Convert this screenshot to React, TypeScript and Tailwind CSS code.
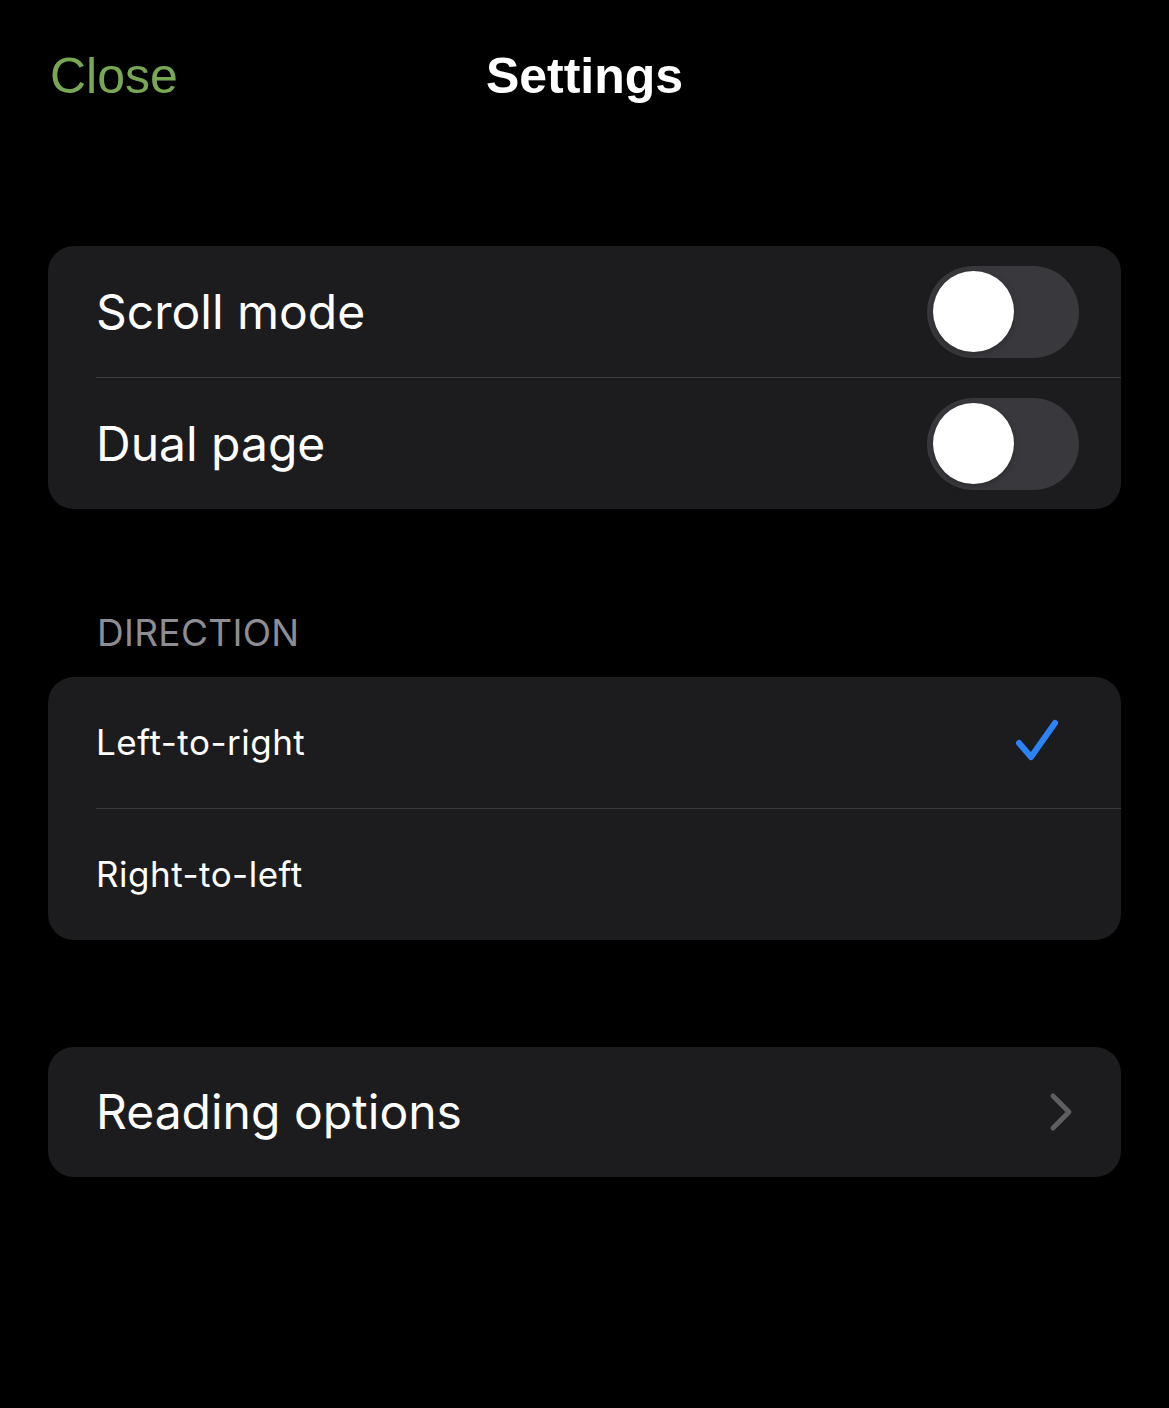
import React from "react";

function Toggle() {
  return (
    <div className="w-[152px] h-[92px] rounded-full bg-[#39393d] p-[6px] flex items-center">
      <div className="w-[81px] h-[81px] rounded-full bg-white shadow-[0_2px_6px_rgba(0,0,0,0.25)]" />
    </div>
  );
}

function Check() {
  return (
    <svg width="52" height="52" viewBox="0 0 52 52" fill="none">
      <path
        d="M6 26 L18 40 L42 6"
        stroke="#2b84f6"
        strokeWidth="6"
        strokeLinecap="round"
        strokeLinejoin="round"
      />
    </svg>
  );
}

function Chevron() {
  return (
    <svg width="30" height="40" viewBox="0 0 30 40" fill="none">
      <path
        d="M6 4 L22 20 L6 36"
        stroke="#5d5d62"
        strokeWidth="5"
        strokeLinecap="round"
        strokeLinejoin="round"
      />
    </svg>
  );
}

export default function App() {
  const sf = { fontFamily: "Inter, 'Liberation Sans', sans-serif" };
  return (
    <div className="w-[1169px] h-[1408px] bg-black text-white" style={sf}>
      <header
        className="relative h-[150px] flex items-start pt-[46px] px-[50px]"
        style={{ fontFamily: "'Liberation Sans', Arial, sans-serif" }}
      >
        <span className="text-[50px] leading-[60px] text-[#79a855]">Close</span>
        <span className="absolute left-0 right-0 top-[46px] text-center text-[50px] leading-[60px] font-bold">
          Settings
        </span>
      </header>

      <div className="px-[48px] pt-[96px]">
        <section className="rounded-[26px] bg-[#1c1c1e] overflow-hidden">
          <div className="h-[131px] pl-[48px] pr-[42px] flex items-center justify-between">
            <span className="text-[48px]">Scroll mode</span>
            <Toggle />
          </div>
          <div className="ml-[48px] h-px bg-[#3a3a3c]" />
          <div className="h-[131px] pl-[48px] pr-[42px] flex items-center justify-between">
            <span className="text-[48px]">Dual page</span>
            <Toggle />
          </div>
        </section>

        <div className="pt-[102px] pb-[23px] pl-[49px] text-[37px] leading-[43px] text-[#8d8d93] tracking-[0.3px]">
          DIRECTION
        </div>

        <section className="rounded-[26px] bg-[#1c1c1e] overflow-hidden">
          <div className="h-[131px] pl-[48px] pr-[56px] flex items-center justify-between">
            <span className="text-[35px] tracking-[0.5px]">Left-to-right</span>
            <Check />
          </div>
          <div className="ml-[48px] h-px bg-[#3a3a3c]" />
          <div className="h-[131px] pl-[48px] pr-[56px] flex items-center justify-between">
            <span className="text-[35px] tracking-[0.5px]">Right-to-left</span>
          </div>
        </section>

        <section className="mt-[107px] rounded-[26px] bg-[#1c1c1e] overflow-hidden">
          <div className="h-[130px] pl-[48px] pr-[44px] flex items-center justify-between">
            <span className="text-[48px]">Reading options</span>
            <Chevron />
          </div>
        </section>
      </div>
    </div>
  );
}
